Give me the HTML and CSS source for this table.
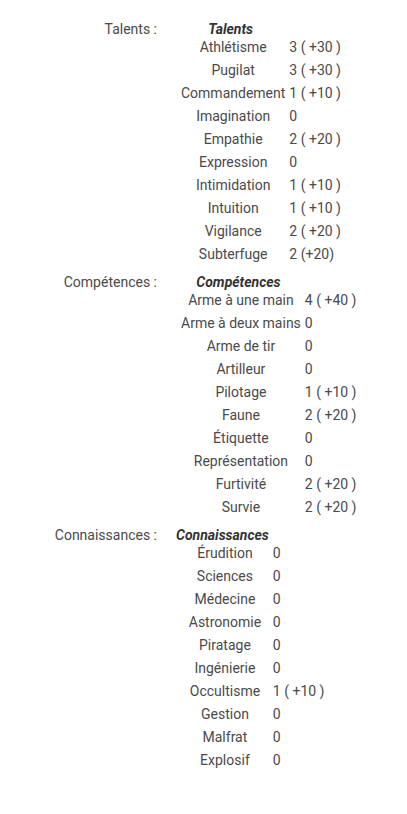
FILE: index.html
```html
<!DOCTYPE html>
<html lang="fr">
<head>
<meta charset="utf-8">
<title>Fiche</title>
<link rel="stylesheet" href="styles.css">
</head>
<body>
<div class="sheet">
  <div class="label">Talents :</div>
  <table class="skills">
    <thead><tr><th>Talents</th><th></th></tr></thead>
    <tbody>
      <tr><td class="name">Athlétisme</td><td class="val">3 ( +30 )</td></tr>
      <tr><td class="name">Pugilat</td><td class="val">3 ( +30 )</td></tr>
      <tr><td class="name">Commandement</td><td class="val">1 ( +10 )</td></tr>
      <tr><td class="name">Imagination</td><td class="val">0</td></tr>
      <tr><td class="name">Empathie</td><td class="val">2 ( +20 )</td></tr>
      <tr><td class="name">Expression</td><td class="val">0</td></tr>
      <tr><td class="name">Intimidation</td><td class="val">1 ( +10 )</td></tr>
      <tr><td class="name">Intuition</td><td class="val">1 ( +10 )</td></tr>
      <tr><td class="name">Vigilance</td><td class="val">2 ( +20 )</td></tr>
      <tr><td class="name">Subterfuge</td><td class="val">2 (+20)</td></tr>
    </tbody>
  </table>

  <div class="label">Compétences :</div>
  <table class="skills">
    <thead><tr><th>Compétences</th><th></th></tr></thead>
    <tbody>
      <tr><td class="name">Arme à une main</td><td class="val">4 ( +40 )</td></tr>
      <tr><td class="name">Arme à deux mains</td><td class="val">0</td></tr>
      <tr><td class="name">Arme de tir</td><td class="val">0</td></tr>
      <tr><td class="name">Artilleur</td><td class="val">0</td></tr>
      <tr><td class="name">Pilotage</td><td class="val">1 ( +10 )</td></tr>
      <tr><td class="name">Faune</td><td class="val">2 ( +20 )</td></tr>
      <tr><td class="name">Étiquette</td><td class="val">0</td></tr>
      <tr><td class="name">Représentation</td><td class="val">0</td></tr>
      <tr><td class="name">Furtivité</td><td class="val">2 ( +20 )</td></tr>
      <tr><td class="name">Survie</td><td class="val">2 ( +20 )</td></tr>
    </tbody>
  </table>

  <div class="label">Connaissances :</div>
  <table class="skills">
    <thead><tr><th>Connaissances</th><th></th></tr></thead>
    <tbody>
      <tr><td class="name">Érudition</td><td class="val">0</td></tr>
      <tr><td class="name">Sciences</td><td class="val">0</td></tr>
      <tr><td class="name">Médecine</td><td class="val">0</td></tr>
      <tr><td class="name">Astronomie</td><td class="val">0</td></tr>
      <tr><td class="name">Piratage</td><td class="val">0</td></tr>
      <tr><td class="name">Ingénierie</td><td class="val">0</td></tr>
      <tr><td class="name">Occultisme</td><td class="val">1 ( +10 )</td></tr>
      <tr><td class="name">Gestion</td><td class="val">0</td></tr>
      <tr><td class="name">Malfrat</td><td class="val">0</td></tr>
      <tr><td class="name">Explosif</td><td class="val">0</td></tr>
    </tbody>
  </table>
</div>
</body>
</html>
```

FILE: styles.css
```css
html, body {
  margin: 0;
  background: #ffffff;
}

body {
  font-family: Roboto, "Liberation Sans", sans-serif;
  font-size: 14px;
  line-height: 17px;
  color: #4a4a4a;
}

.sheet {
  display: grid;
  grid-template-columns: 157px auto;
  column-gap: 19px;
  row-gap: 6px;
  align-items: start;
  justify-items: start;
  padding-top: 21px;
}

.label {
  justify-self: end;
  text-align: right;
}

.skills {
  border-collapse: collapse;
  border-spacing: 0;
}

.skills th {
  padding: 0;
  font-weight: bold;
  font-style: italic;
  color: #333333;
  text-align: center;
}

.skills td {
  padding: 1px 0 5px 0;
  vertical-align: top;
}

.skills .name {
  text-align: center;
  padding-left: 5px;
  white-space: nowrap;
}

.skills .val {
  text-align: left;
  padding-left: 4px;
  white-space: pre;
}
```
